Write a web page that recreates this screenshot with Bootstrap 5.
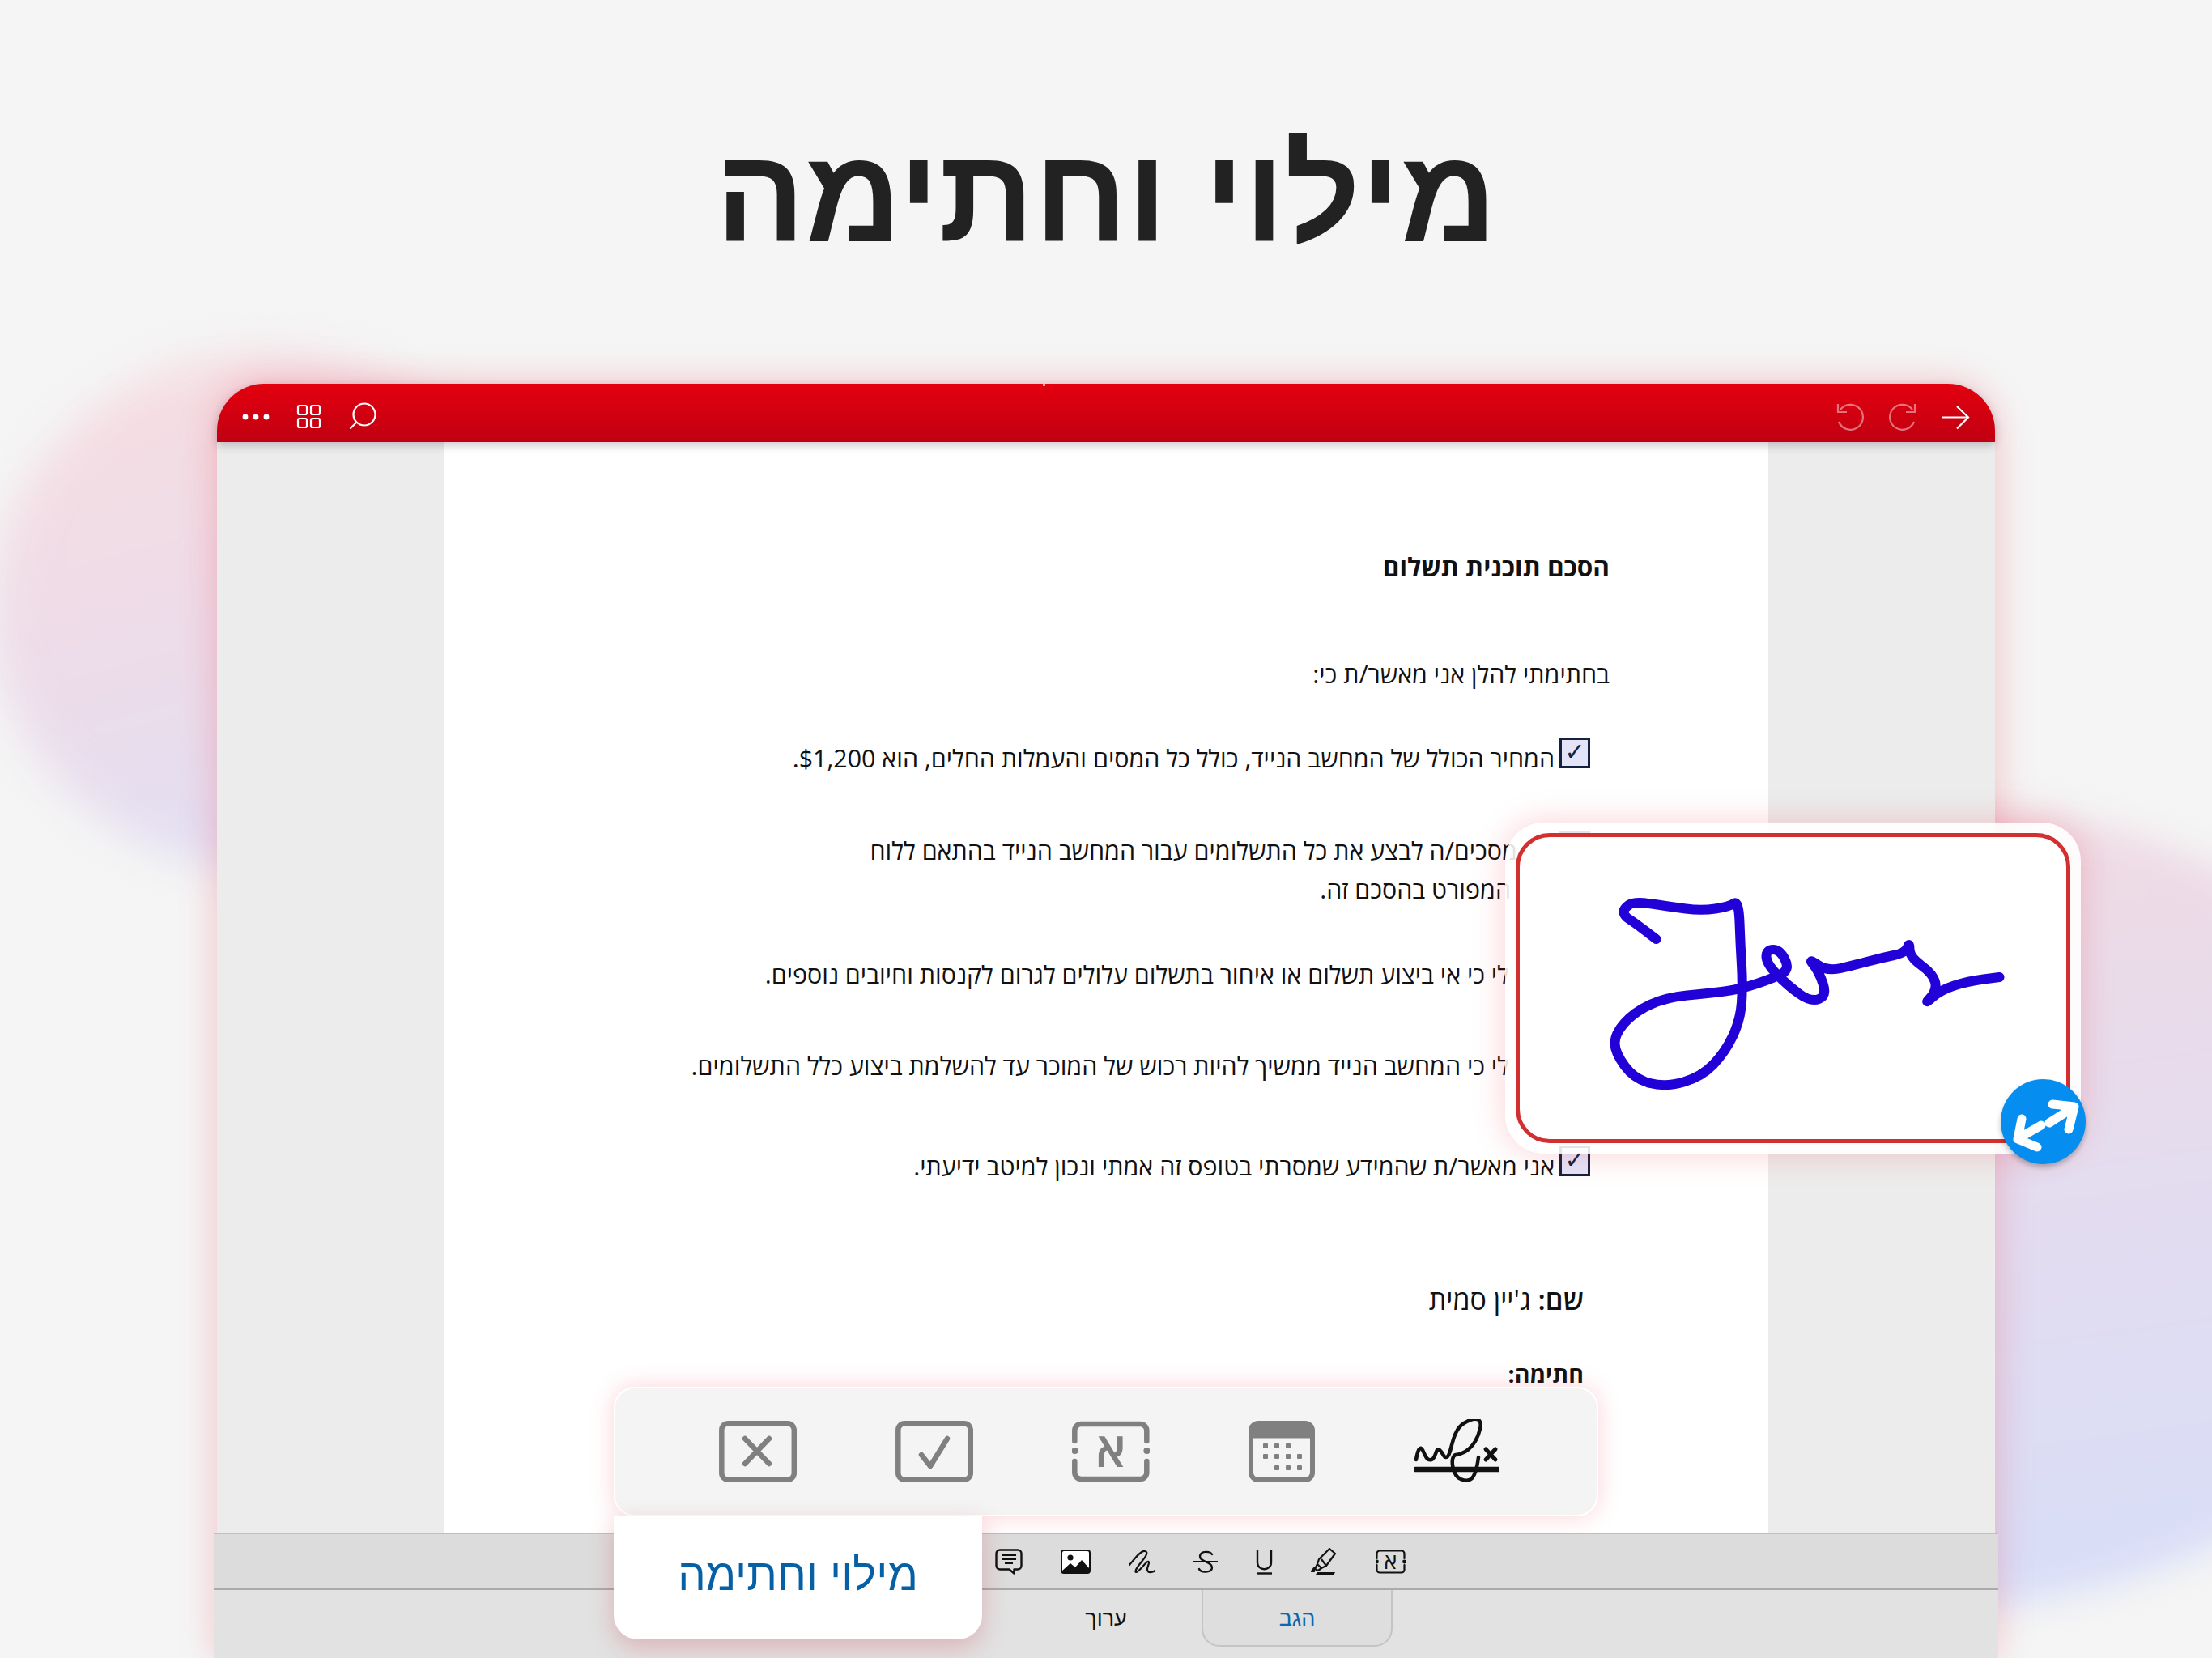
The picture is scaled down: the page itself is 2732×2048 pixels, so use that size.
<!DOCTYPE html>
<html lang="he" dir="rtl">
<head>
<meta charset="utf-8">
<title>מילוי וחתימה</title>
<link href="https://cdn.jsdelivr.net/npm/bootstrap@5.3.0/dist/css/bootstrap.min.css" rel="stylesheet">
<style>
html,body{height:2048px;margin:0}
body{width:2732px;overflow:hidden;background:#f5f5f5;font-family:"Open Sans","Liberation Sans",sans-serif;color:#1a1a1a;position:relative}
.blob-left{position:absolute;left:-10px;top:435px;width:680px;height:640px;border-radius:50%;background:linear-gradient(165deg,#f7dde0 0%,#ecdcea 55%,#dce0f7 100%);filter:blur(26px)}
.blob-right{position:absolute;left:1650px;top:990px;width:1408px;height:1000px;border-radius:50%;background:linear-gradient(172deg,#f3dae0 0%,#e4dcef 50%,#d6def9 100%);filter:blur(22px)}
.page-title{position:relative;height:474px;margin:0;padding-top:129px;text-align:center;font-family:"Liberation Sans",sans-serif;font-size:164px;line-height:224px;font-weight:700;color:#222}
.app-window{position:relative;width:2196px;height:1574px;margin-right:268px;background:#ececec;border-radius:58px 58px 0 0;box-shadow:0 0 46px rgba(235,40,60,.26)}
.app-bar{height:72px;border-radius:58px 58px 0 0;background:linear-gradient(180deg,#e4000f,#c00011);box-shadow:0 4px 12px rgba(0,0,0,.22);position:relative;z-index:2;padding:0 30px}
.app-bar::after{content:"";position:absolute;left:1020px;top:0;width:3px;height:3px;background:#f6a0a0}
.doc-area{height:1347px;overflow:hidden}
.doc-sheet{width:1636px;height:100%;background:#fff;padding:130px 196px 0 0;font-size:30.4px;line-height:48px;color:#111}
.doc-sheet p{margin:0;white-space:nowrap}
.doc-head{font-size:31.5px}
.wrap-line{display:block;padding-right:54px}
.tick-row{display:flex;align-items:center;gap:6px;margin-right:-2px}
.tick-box{flex:none;width:38px;height:38px;border:3px solid #16213f;background:#e4e4f8;font-family:"DejaVu Sans",sans-serif;font-size:30px;line-height:30px;text-align:center;color:#16213f;margin-right:26px;margin-top:-14px}
.tick-top{align-self:flex-start;margin-top:0}
.sp1{margin-top:85px!important}.sp2{margin-top:56px!important}.sp3{margin-top:66px!important}.sp4{margin-top:57px!important}.sp5{margin-top:65px!important}.sp6{margin-top:76px!important}.sp7{margin-top:116px!important}.sp8{margin-top:44px!important}
.sign-line{padding-right:32px;font-size:34px}
.sign-small{font-size:28.5px}
.tool-strip{height:71px;margin:0 -4px;background:#dcdcdc;border-top:2px solid #c2bebe;border-bottom:2px solid #aaa;padding-left:965px;gap:47px;position:relative}
.tab-strip{height:84px;margin:0 -4px;background:#e2e2e2;padding-left:984px;position:relative;font-family:"Liberation Sans",sans-serif;font-size:27px;color:#111}
.tab-item{width:236px;height:70px;line-height:70px;text-align:center}
.tab-on{background:#dedede;border:2px solid #c4c4c4;border-top:0;border-radius:0 0 22px 22px;color:#0a68b0}
.sig-card{position:absolute;left:1591px;top:542px;width:711px;height:409px;padding:13px;background:rgba(255,255,255,.88);border-radius:48px;box-shadow:0 0 40px rgba(235,40,60,.22);z-index:3}
.sig-inner{height:100%;background:#fff;border:5px solid #d32f2f;border-radius:42px;overflow:hidden}
.sig-inner svg{display:block;width:100%;height:100%}
.sig-handle{position:absolute;left:612px;top:317px;width:105px;height:105px;border-radius:50%;background:#058ef0;box-shadow:0 4px 6px rgba(0,0,0,.25)}
.tool-pop{position:absolute;left:490px;top:1239px;width:1216px;z-index:4}
.tool-panel{height:160px;background:#f4f4f4;border:2px solid #fff;border-radius:26px;padding:40px 0 0 128px;gap:122px;box-shadow:0 0 30px rgba(240,60,80,.22)}
.frame-icon{position:relative;flex:none;display:block}
.frame-icon svg{display:block}
.alef-big,.alef-small{position:absolute;left:0;right:0;top:0;text-align:center;font-family:"Open Sans",sans-serif}
.alef-big{font-size:60px;line-height:68px;font-weight:600;color:#808080}
.alef-small{font-size:27px;line-height:27px;color:#111}
.sig-tool{margin-top:-2px}
.tool-label{width:455px;height:153px;margin-top:-1px;padding-bottom:4px;background:#fff;border-radius:0 0 30px 30px;font-family:"Liberation Sans",sans-serif;font-size:54.5px;line-height:1;font-weight:400;color:#0560a6;box-shadow:0 10px 30px rgba(200,40,60,.25);position:relative}
</style>
</head>
<body>
<div class="blob-left"></div>
<div class="blob-right"></div>
<h1 class="page-title">מילוי וחתימה</h1>
<main class="app-window">
  <header class="app-bar d-flex align-items-center justify-content-between" dir="ltr">
    <div class="d-flex">
      <svg width="180" height="72" viewBox="298 474 180 72" fill="none" stroke="#fff" stroke-width="2.2">
        <g fill="#fff" stroke="none"><circle cx="303" cy="515" r="3.4"/><circle cx="316" cy="515" r="3.4"/><circle cx="329" cy="515" r="3.4"/></g>
        <rect x="368" y="501" width="11" height="11" rx="2"/><rect x="384" y="501" width="11" height="11" rx="2"/><rect x="368" y="517" width="11" height="11" rx="2"/><rect x="384" y="517" width="11" height="11" rx="2"/>
        <circle cx="450" cy="512" r="13.5"/><path d="M440 522l-7 7" stroke-linecap="round"/>
      </svg>
    </div>
    <svg width="170" height="72" viewBox="2264 474 170 72" fill="none" stroke="#fff" stroke-width="2.2">
      <g opacity=".45">
        <path d="M2273 506a15.500 15.500 0 1 1-2 15"/><path d="M2270 499v10h11"/>
        <path d="M2362 506a15.500 15.500 0 1 0 2 15"/><path d="M2365 499v10h-11"/>
      </g>
      <path d="M2398 515.500h33M2417 502l14 13.500-14 14"/>
    </svg>
  </header>
  <div class="doc-area d-flex justify-content-center">
    <article class="doc-sheet">
      <p class="fw-bold doc-head">הסכם תוכנית תשלום</p>
      <p class="sp1">בחתימתי להלן אני מאשר/ת כי:</p>
      <div class="tick-row sp2"><span class="tick-box">✓</span><p>המחיר הכולל של המחשב הנייד, כולל כל המסים והעמלות החלים, הוא $1,200.</p></div>
      <div class="tick-row sp3"><span class="tick-box tick-top">✓</span><p>אני מסכים/ה לבצע את כל התשלומים עבור המחשב הנייד בהתאם ללוח<span class="wrap-line">המפורט בהסכם זה.</span></p></div>
      <div class="tick-row sp4"><span class="tick-box">✓</span><p>ידוע לי כי אי ביצוע תשלום או איחור בתשלום עלולים לגרום לקנסות וחיובים נוספים.</p></div>
      <div class="tick-row sp5"><span class="tick-box">✓</span><p>ידוע לי כי המחשב הנייד ממשיך להיות רכוש של המוכר עד להשלמת ביצוע כלל התשלומים.</p></div>
      <div class="tick-row sp6"><span class="tick-box">✓</span><p>אני מאשר/ת שהמידע שמסרתי בטופס זה אמתי ונכון למיטב ידיעתי.</p></div>
      <p class="sign-line sp7"><span class="fw-semibold">שם:</span> ג'יין סמית</p>
      <p class="sign-line sign-small sp8 fw-bold">חתימה:</p>
    </article>
  </div>
  <div class="tool-strip d-flex align-items-center" dir="ltr">
    <svg width="34" height="32" viewBox="0 0 34 32" fill="none" stroke="#111" stroke-width="2.4" stroke-linejoin="round"><path d="M6 1.500h22a4.500 4.500 0 0 1 4.500 4.500v15a4.500 4.500 0 0 1-4.500 4.500h-4.500v5l-6-5H6A4.500 4.500 0 0 1 1.500 21V6A4.500 4.500 0 0 1 6 1.500z"/><path d="M8 8h18M8 13h18M12 18h10" stroke-width="2"/></svg>
    <svg width="37" height="30" viewBox="0 0 37 30"><rect x="1" y="1" width="35" height="28" rx="3" fill="#fff" stroke="#111" stroke-width="2"/><circle cx="12" cy="10" r="3.600" fill="#111"/><path d="M1 27l11-10 6 5 8-9 10 11v3a2 2 0 0 1-2 2H3a2 2 0 0 1-2-2z" fill="#111"/></svg>
    <svg width="33" height="32" viewBox="0 0 33 32" fill="none" stroke="#111" stroke-width="2.200" stroke-linecap="round"><path d="M1 20C7 13 15 2 20 3s1 7-4 13-9 12-7 13 8-7 12-11 5-2 3 3-1 9 4 8 5-3 5-3"/></svg>
    <svg width="30" height="32" viewBox="0 0 30 32" fill="none" stroke="#111" stroke-width="2.400" stroke-linecap="round"><path d="M23 7c-2-4-14-5-15 2s15 7 15 14-14 7-16 2"/><path d="M0 16h30" stroke-width="2"/></svg>
    <svg width="21" height="32" viewBox="0 0 21 32" fill="none" stroke="#111" stroke-width="2.400"><path d="M2 1v16c0 11 17 11 17 0V1"/><path d="M1 30.500h19"/></svg>
    <svg width="33" height="34" viewBox="0 0 33 34" fill="none" stroke="#111" stroke-width="2.200" stroke-linejoin="round"><path d="M23 1l7 6-11 15-6 3-5-5 2-6z"/><path d="M8 20l-3 6 4 2 4-3"/><path d="M13 14l6 8"/><path d="M4 29h-3l3-4z" fill="#111"/><path d="M8 30h22l-1.500 3H6z" fill="#111" stroke="none"/></svg>
    <span class="frame-icon"><svg width="37" height="30" viewBox="0 0 37 30" fill="none" stroke="#111" stroke-width="2.200" stroke-linecap="round"><path d="M1.500 11V5a3.500 3.500 0 0 1 3.500-3.500h27A3.500 3.500 0 0 1 35.500 5v6M1.500 19v6A3.500 3.500 0 0 0 5 28.500h27a3.500 3.500 0 0 0 3.500-3.500v-6"/><circle cx="1.500" cy="15" r="1.300" fill="#111"/><circle cx="35.500" cy="15" r="1.300" fill="#111"/></svg><span class="alef-small">א</span></span>
  </div>
  <div class="tab-strip d-flex" dir="ltr">
    <div class="tab-item">ערוך</div>
    <div class="tab-item tab-on">הגב</div>
  </div>
  <div class="sig-card">
    <div class="sig-inner">
      <svg viewBox="38 34 674 373" fill="none"><path id="sigStroke" stroke="#2200d8" stroke-width="12" stroke-linecap="round" stroke-linejoin="round" d=""/></svg>
    </div>
    <div class="sig-handle">
      <svg width="105" height="105" viewBox="0 0 105 105" fill="none" stroke="#fff" stroke-width="11" stroke-linecap="round" stroke-linejoin="round"><path d="M60 54L88 36M64 31l27 3-7 28M50 57L24 72M26 49l-5 25 24 10"/></svg>
    </div>
  </div>
  <section class="tool-pop" dir="ltr">
    <div class="tool-panel d-flex">
      <svg width="96" height="76" viewBox="0 0 96 76" fill="none" stroke="#808080" stroke-width="6.500" stroke-linecap="round"><rect x="3.300" y="3.300" width="89.500" height="69.500" rx="8"/><path d="M32 22l30 31M62 22L32 53"/></svg>
      <svg width="96" height="76" viewBox="0 0 96 76" fill="none" stroke="#808080" stroke-width="6.500" stroke-linecap="round" stroke-linejoin="round"><rect x="3.300" y="3.300" width="89.500" height="69.500" rx="8"/><path d="M32 42l11 14 21-34"/></svg>
      <span class="frame-icon"><svg width="96" height="76" viewBox="0 0 96 76" fill="none" stroke="#808080" stroke-width="6.500" stroke-linecap="round"><path d="M3.300 25V12a8 8 0 0 1 8-8h73a8 8 0 0 1 8 8v13M3.300 50v14a8 8 0 0 0 8 8h73a8 8 0 0 0 8-8V50"/><circle cx="3.600" cy="37" r="4" fill="#808080" stroke="none"/><circle cx="92.400" cy="37" r="4" fill="#808080" stroke="none"/></svg><span class="alef-big">א</span></span>
      <svg width="82" height="76" viewBox="0 0 82 76"><rect x="3" y="3" width="76" height="70" rx="9" fill="#f4f4f4" stroke="#808080" stroke-width="6"/><path d="M3 20V12a9 9 0 0 1 9-9h58a9 9 0 0 1 9 9v8z" fill="#808080" stroke="#808080" stroke-width="3"/><g fill="#808080"><rect x="18" y="28" width="6" height="6" rx="1"/><rect x="32" y="28" width="6" height="6" rx="1"/><rect x="46" y="28" width="6" height="6" rx="1"/><rect x="18" y="41" width="6" height="6" rx="1"/><rect x="32" y="41" width="6" height="6" rx="1"/><rect x="46" y="41" width="6" height="6" rx="1"/><rect x="60" y="41" width="6" height="6" rx="1"/><rect x="32" y="55" width="6" height="6" rx="1"/><rect x="46" y="55" width="6" height="6" rx="1"/><rect x="60" y="55" width="6" height="6" rx="1"/></g></svg>
      <svg class="sig-tool" width="106" height="78" viewBox="0 0 106 78" fill="none" stroke="#111" stroke-width="4.500" stroke-linecap="round" stroke-linejoin="round"><path d="M3 50C5 38 8 32 11 38S16 52 22 50 27 34 32 38 37 50 42 46 47 14 62 5 85 -1 82 12 70 42 52 44C44 46 48 70 58 74S76 78 80 47"/><path d="M2 62h103" stroke-width="6.500"/><path d="M89 37l12 13M101 37L89 50" stroke-width="5"/></svg>
    </div>
    <div class="tool-label d-flex align-items-center justify-content-center" dir="rtl">מילוי וחתימה</div>
  </section>
</main>
<script>
var p=[[206,160],[180,140],[167,132],[165,123],[179,113],[223,120],[262,125],[296,120],[308,112],[310,167],[313,217],[310,260],[291,300],[262,330],[218,343],[179,333],[155,300],[155,277],[179,250],[218,232],[271,227],[310,222],[354,207],[371,197],[359,173],[342,173],[342,190],[368,217],[397,238],[417,230],[407,200],[393,183],[417,200],[451,192],[485,183],[514,177],[519,163],[519,182],[548,203],[553,223],[536,242],[557,223],[591,212],[630,207]];
var d="M"+p[0].join(" ");
for(var i=1;i<p.length-1;i++){d+=" Q"+p[i].join(" ")+" "+((p[i][0]+p[i+1][0])/2)+" "+((p[i][1]+p[i+1][1])/2);}
d+=" L"+p[p.length-1].join(" ");
document.getElementById("sigStroke").setAttribute("d",d);
</script>
<script src="https://cdn.jsdelivr.net/npm/bootstrap@5.3.0/dist/js/bootstrap.bundle.min.js"></script>
</body>
</html>
